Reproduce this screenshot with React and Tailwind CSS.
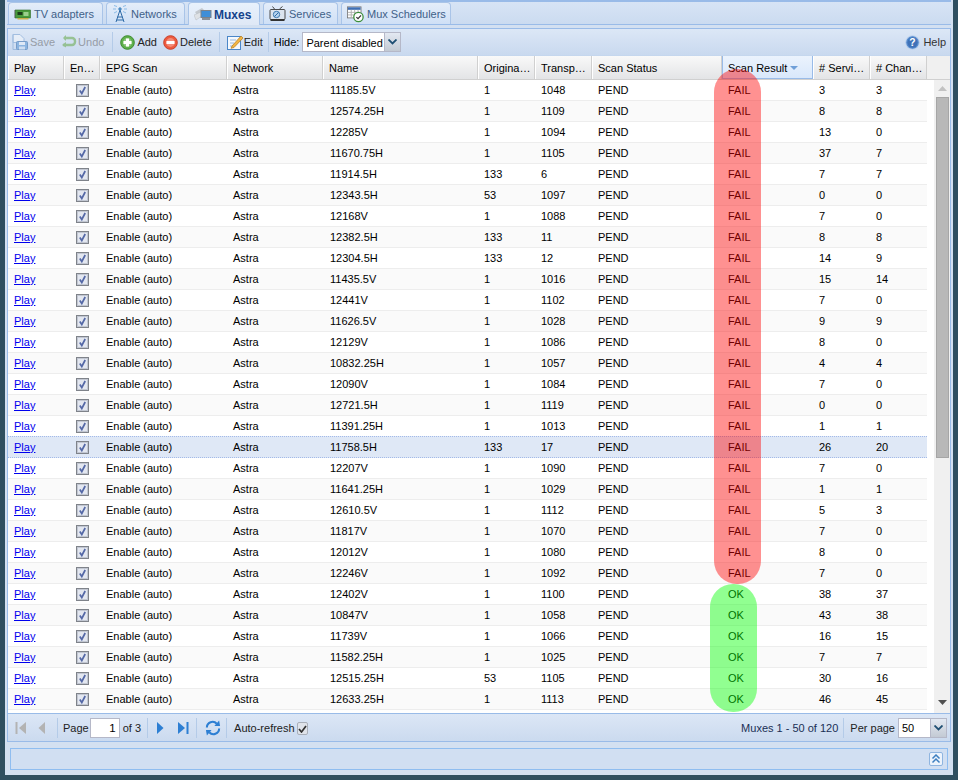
import React from "react";

const rows = [
["11185.5V","1","1048","3","3"],["12574.25H","1","1109","8","8"],["12285V","1","1094","13","0"],["11670.75H","1","1105","37","7"],
["11914.5H","133","6","7","7"],["12343.5H","53","1097","0","0"],["12168V","1","1088","7","0"],["12382.5H","133","11","8","8"],
["12304.5H","133","12","14","9"],["11435.5V","1","1016","15","14"],["12441V","1","1102","7","0"],["11626.5V","1","1028","9","9"],
["12129V","1","1086","8","0"],["10832.25H","1","1057","4","4"],["12090V","1","1084","7","0"],["12721.5H","1","1119","0","0"],
["11391.25H","1","1013","1","1"],["11758.5H","133","17","26","20"],["12207V","1","1090","7","0"],["11641.25H","1","1029","1","1"],
["12610.5V","1","1112","5","3"],["11817V","1","1070","7","0"],["12012V","1","1080","8","0"],["12246V","1","1092","7","0"],
["12402V","1","1100","38","37"],["10847V","1","1058","43","38"],["11739V","1","1066","16","15"],["11582.25H","1","1025","7","7"],
["12515.25H","53","1105","30","16"],["12633.25H","1","1113","46","45"],
];

const Sep = () => <div className="w-px h-[20px] bg-[#b4cbe8] mx-[3px] shrink-0" />;

const HCell = ({ w, children, active }) => (
  <div
    className={`${w} shrink-0 h-full flex items-center pt-[2px] pl-[5px] pr-[2px] whitespace-nowrap overflow-hidden border-r border-l ${
      active
        ? "border-[#99bbe8] border-b bg-gradient-to-b from-[#ebf3fd] to-[#d9e8fb]"
        : "border-l-white border-r-[#d0d0d0] bg-gradient-to-b from-[#f9f9f9] to-[#e3e4e6]"
    }`}
  >
    {children}
  </div>
);

const Cell = ({ w, children, className = "" }) => (
  <div className={`${w} shrink-0 pl-[6px] whitespace-nowrap overflow-hidden ${className}`}>{children}</div>
);

const Check = () => (
  <svg width="13" height="13" viewBox="0 0 13 13" className="block">
    <rect x="0.5" y="0.5" width="12" height="12" fill="#dfe4ee" stroke="#7f838a" />
    <rect x="1.5" y="1.5" width="10" height="10" fill="#e3e7f0" stroke="#c2c7d2" />
    <path d="M3.8 6.5 L5.8 9.5 L9.2 3" fill="none" stroke="#5468a6" strokeWidth="1.7" />
  </svg>
);

const Tab = ({ w, icon, label, active }) => (
  <div
    className={`${w} shrink-0 flex items-center pt-px pl-[5px] rounded-t-[4px] border border-[#a9c4e8] whitespace-nowrap ${
      active
        ? "bg-gradient-to-b from-[#e8f1fc] to-[#dfe8f6] border-b-0 h-[23px] -mb-px font-bold text-[#15428b] text-[12px] gap-[2px]"
        : "h-[22px] gap-[3px] bg-gradient-to-b from-[#e4edf9] to-[#cfe0f6] border-b-0 text-[#3f6188] text-[11px]"
    }`}
  >
    {icon}
    <span>{label}</span>
  </div>
);

const CardIcon = () => (
  <svg width="17" height="14" viewBox="0 0 16 14">
    <path d="M0 3h1v8H0z" fill="#555" />
    <rect x="1" y="3" width="15" height="8" fill="#4a9c3c" stroke="#2f6b28" strokeWidth="0.6" />
    <rect x="3" y="5" width="5" height="3" fill="#1c3d1a" />
    <rect x="9" y="5" width="5" height="4" fill="#9bd08d" />
    <path d="M3 11h11v1.5H3z" fill="#c9b04a" />
  </svg>
);
const TowerIcon = () => (
  <svg width="16" height="18" viewBox="0 0 16 18" fill="none" stroke="#3d7fb8" strokeWidth="1">
    <path d="M8 5 L4 17 M8 5 L12 17 M5.5 12h5 M4.6 15h6.8" stroke="#2e6aa6" />
    <circle cx="8" cy="4" r="1.2" fill="#6aa8df" />
    <path d="M5 1.5 L2 0.5 M11 1.5 L14 0.5 M4 4H1 M12 4h3 M5 6.5 L2 8 M11 6.5 L14 8" stroke="#8bbbe6" />
  </svg>
);
const MuxIcon = () => (
  <svg width="18" height="15" viewBox="0 0 18 15">
    <path d="M1 5l7-4 2 2-7 5z" fill="#c3c8ce" />
    <path d="M0 8l7-3 1 4-6 4z" fill="#dfe2e6" stroke="#b5bac1" strokeWidth="0.5" />
    <rect x="7" y="3.5" width="10" height="7" fill="#3f8ed8" stroke="#7b828b" />
    <rect x="8" y="11" width="8" height="2" fill="#8a9099" />
  </svg>
);
const ServIcon = () => (
  <svg width="17" height="16" viewBox="0 0 16 16" fill="none">
    <path d="M5 3 L3 0.5 M10 3 L13 0.5" stroke="#444" />
    <rect x="0.5" y="3.5" width="15" height="10" rx="1" fill="#dbe4ef" stroke="#4a4a4a" />
    <circle cx="7" cy="8.5" r="3.2" fill="#b5d3ef" stroke="#3d78b0" />
    <path d="M5 10.5l4-4" stroke="#2e6aa6" />
    <rect x="1" y="13" width="14" height="2" fill="#333" />
  </svg>
);
const SchedIcon = () => (
  <svg width="17" height="17" viewBox="0 0 20 19" fill="none">
    <rect x="0.5" y="0.5" width="16" height="13" fill="#fff" stroke="#777" />
    <rect x="1" y="1" width="15" height="3" fill="#3f6fb5" />
    <path d="M1 7h15M1 10h15M5 4v9M9 4v9M13 4v9" stroke="#aaa" />
    <circle cx="13.5" cy="12.5" r="5.5" fill="#fff" stroke="#3c8f3c" strokeWidth="1.5" />
    <path d="M11 12.5l2 2 3.5-4" stroke="#333" strokeWidth="1.4" />
  </svg>
);
const SaveIcon = () => (
  <svg width="16" height="16" viewBox="0 0 16 16" className="opacity-60">
    <path d="M1 .5h7l4 4v4H1z" fill="#f2f6fb" stroke="#7fa6d4" />
    <path d="M1 .5V15.5h4" fill="none" stroke="#7fa6d4" />
    <rect x="4.5" y="7.5" width="11" height="8" rx="1" fill="#5f9ad6" stroke="#3d72ad" />
    <rect x="7" y="8" width="6" height="3" fill="#e8f0fa" />
    <rect x="7" y="12.5" width="6" height="3" fill="#cfe0f2" />
  </svg>
);
const UndoIcon = () => (
  <svg width="16" height="16" viewBox="0 0 16 16" fill="none" className="opacity-60">
    <path d="M3 4h8a3 3 0 0 1 3 3v1a3 3 0 0 1-3 3H2" stroke="#6fae56" strokeWidth="2.4" />
    <path d="M5 13.5L1 11l4-3z" fill="#6fae56" />
    <path d="M5 1L2 4l3 3z" fill="#6fae56" />
  </svg>
);
const CircleBtn = ({ bg, border, plus }) => (
  <svg width="15" height="15" viewBox="0 0 15 15">
    <circle cx="7.5" cy="7.5" r="6.8" fill={bg} stroke={border} />
    <circle cx="7.5" cy="7.5" r="4.4" fill="#ffffff" fillOpacity="0.3" />
    {plus && <rect x="6" y="3.5" width="3" height="8" fill="#fff" />}
    <rect x="3.5" y="6" width="8" height="3" fill="#fff" />
  </svg>
);
const EditIcon = () => (
  <svg width="16" height="16" viewBox="0 0 16 16" fill="none">
    <rect x="0.5" y="2.5" width="13" height="13" fill="#f4f8fd" stroke="#4a86c8" />
    <path d="M3 6h6M3 9h4M3 12h3" stroke="#9ab8dc" />
    <path d="M5 12l9-10 2 2-9 9.5-3 .8z" fill="#f2b544" stroke="#b07a1e" strokeWidth="0.7" />
  </svg>
);
const HelpIcon = () => (
  <svg width="15" height="15" viewBox="0 0 16 16">
    <circle cx="8" cy="8" r="7.3" fill="#5b8fd0" stroke="#c3d6ee" />
    <circle cx="8" cy="8" r="5.5" fill="#3f72b8" />
    <text x="8" y="12" textAnchor="middle" fontSize="11" fontWeight="700" fill="#fff" fontFamily="Liberation Sans">?</text>
  </svg>
);
const Chevron = () => (
  <svg width="9" height="6" viewBox="0 0 9 6"><path d="M0.5 0.5L4.5 4.5L8.5 0.5" fill="none" stroke="#1f4f73" strokeWidth="1.8" /></svg>
);
const Combo = ({ w, text }) => (
  <div className={`${w} h-[20px] flex border border-[#b5b8c8] bg-white shrink-0`}>
    <div className="flex-1 min-w-0 pl-[3px] pt-[2px] flex items-center text-[11px] text-black whitespace-nowrap">{text}</div>
    <div className="w-[16px] shrink-0 border-l border-[#b5b8c8] bg-gradient-to-b from-[#e3e9f2] to-[#c3cad4] flex items-center justify-center"><Chevron /></div>
  </div>
);
const First = ({ c = "#b3b3b3", flip }) => (
  <svg width="12" height="14" viewBox="0 0 12 14">
    <g transform={flip ? "matrix(-1 0 0 1 12 0)" : undefined}>
      <rect x="0.5" y="1" width="2" height="12" fill={c} />
      <path d="M11 1v12L4 7z" fill={c} />
    </g>
  </svg>
);
const Arrow = ({ c = "#b3b3b3", flip }) => (
  <svg width="8" height="14" viewBox="0 0 8 14"><path d={flip ? "M1 1v12l6.5-6z" : "M7 1v12L.5 7z"} fill={c} /></svg>
);

export default function App() {
  return (
    <div className="relative w-[958px] h-[780px] overflow-hidden bg-[#2f4f60] p-[0_5px_5px_5px] text-[11px] text-black font-['Liberation_Sans',Arial,sans-serif]">
      <div className="h-[775px] w-[948px] bg-[#d3e0f1] px-[2px] flex flex-col">
        {/* Tabs */}
        <div className="h-[25px] shrink-0 border-t-2 border-[#99bbe8] border-b bg-gradient-to-b from-[#d7e4f5] to-[#cbdbf0] flex items-end gap-[3px] pl-px">
          <Tab w="w-[95px]" icon={<CardIcon />} label="TV adapters" />
          <Tab w="w-[79px]" icon={<TowerIcon />} label="Networks" />
          <Tab w="w-[72px]" icon={<MuxIcon />} label="Muxes" active />
          <Tab w="w-[75px]" icon={<ServIcon />} label="Services" />
          <Tab w="w-[110px]" icon={<SchedIcon />} label="Mux Schedulers" />
        </div>
        {/* Panel */}
        <div className="mt-[3px] w-[944px] border-x border-[#99bbe8] flex flex-col h-[714px] shrink-0">
          {/* Toolbar */}
          <div className="h-[28px] shrink-0 border-y border-[#99bbe8] border-b-[#c5d7ee] bg-gradient-to-b from-[#dce7f6] to-[#c9d9ef] flex items-center pl-[4px] pr-[4px] text-[#222]">
            <div className="flex items-center gap-[2px] text-[#969ca6]"><SaveIcon /><span>Save</span></div>
            <div className="flex items-center gap-[1px] text-[#969ca6] ml-[6px]"><UndoIcon /><span>Undo</span></div>
            <div className="ml-[5px]"><Sep /></div>
            <div className="flex items-center gap-[2px] ml-[4px]"><CircleBtn bg="#5fb04c" border="#3b8a2c" plus /><span>Add</span></div>
            <div className="flex items-center gap-[2px] ml-[6px]"><CircleBtn bg="#ee5a3e" border="#c9402a" /><span>Delete</span></div>
            <div className="ml-[4px]"><Sep /></div>
            <div className="flex items-center gap-[1px] ml-[4px]"><EditIcon /><span>Edit</span></div>
            <div className="ml-[2px]"><Sep /></div>
            <span className="ml-[2px] mr-[3px] text-black">Hide:</span>
            <Combo w="w-[99px]" text="Parent disabled" />
            <div className="ml-auto flex items-center gap-[3px]"><HelpIcon /><span className="text-[#333]">Help</span></div>
          </div>
          {/* Grid */}
          <div className="relative flex-1 bg-white overflow-hidden flex flex-col min-h-0">
            <div className="h-[24px] shrink-0 flex bg-[#f0f0f0] border-b border-[#d0d0d0]">
              <HCell w="w-[56px]">Play</HCell>
              <HCell w="w-[36px]">En…</HCell>
              <HCell w="w-[127px]">EPG Scan</HCell>
              <HCell w="w-[96px]">Network</HCell>
              <HCell w="w-[155px]">Name</HCell>
              <HCell w="w-[57px]">Origina…</HCell>
              <HCell w="w-[57px]">Transp…</HCell>
              <HCell w="w-[130px]">Scan Status</HCell>
              <HCell w="w-[91px]" active>
                Scan Result
                <svg width="8" height="4" viewBox="0 0 8 4" className="ml-[3px]"><path d="M0 0h8L4 4z" fill="#6f9fd8" /></svg>
              </HCell>
              <HCell w="w-[57px]"># Servi…</HCell>
              <HCell w="w-[57px]"># Chan…</HCell>
            </div>
            <div className="flex-1 flex min-h-0">
              <div className="w-[919px] shrink-0 overflow-hidden">
                {rows.map((r, i) => {
                  const sel = i === 17;
                  return (
                    <div
                      key={r[0]}
                      className={`flex items-center border-b ${
                        sel
                          ? "bg-[#dfe8f6] border-dotted border-t border-[#a3bae9] -mt-px h-[22px]"
                          : i % 2
                          ? "h-[21px] bg-[#fafafa] border-[#ededed]"
                          : "h-[21px] bg-white border-[#ededed]"
                      }`}
                    >
                      <Cell w="w-[56px]"><span className="text-[#0000ee] underline">Play</span></Cell>
                      <div className="w-[36px] shrink-0 flex justify-center"><Check /></div>
                      <Cell w="w-[127px]">Enable (auto)</Cell>
                      <Cell w="w-[96px]">Astra</Cell>
                      <Cell w="w-[155px]" className="pl-[7px]">{r[0]}</Cell>
                      <Cell w="w-[57px]">{r[1]}</Cell>
                      <Cell w="w-[57px]">{r[2]}</Cell>
                      <Cell w="w-[130px]">PEND</Cell>
                      <Cell w="w-[91px]">{i < 24 ? "FAIL" : "OK"}</Cell>
                      <Cell w="w-[57px]">{r[3]}</Cell>
                      <Cell w="w-[57px]">{r[4]}</Cell>
                    </div>
                  );
                })}
              </div>
              <div className="w-[7px] shrink-0" />
              <div className="w-[16px] shrink-0 bg-[#f0f0f0] flex flex-col items-center">
                <svg width="9" height="5" viewBox="0 0 9 5" className="mt-[6px]"><path d="M0 5h9L4.5 0z" fill="#c2c2c2" /></svg>
                <div className="mt-[6px] w-[13px] h-[361px] bg-[#b8b8b8] border border-[#a6a6a6]" />
                <svg width="9" height="5" viewBox="0 0 9 5" className="mt-auto mb-[8px]"><path d="M0 0h9L4.5 5z" fill="#505050" /></svg>
              </div>
            </div>
          </div>
          {/* Pager */}
          <div className="h-[29px] shrink-0 border-y border-[#99bbe8] bg-gradient-to-b from-[#dce7f6] to-[#cbdaef] flex items-center pl-[7px] pr-[3px] text-[#222]">
            <First />
            <div className="ml-[11px]"><Arrow /></div>
            <div className="ml-[8px]"><Sep /></div>
            <span className="ml-[2px] pt-[2px]">Page</span>
            <div className="ml-[1px] w-[30px] h-[20px] bg-white border border-[#b5b8c8] flex items-center justify-end pt-[2px] pr-[3px] text-[11.5px] text-black">1</div>
            <span className="ml-[3px] pt-[2px]">of 3</span>
            <div className="ml-[3px]"><Sep /></div>
            <div className="ml-[5px]"><Arrow c="#2d7fd3" flip /></div>
            <div className="ml-[13px]"><First c="#2d7fd3" flip /></div>
            <div className="ml-[4px]"><Sep /></div>
            <svg width="16" height="16" viewBox="0 0 17 17" fill="none" className="ml-[5px]">
              <path d="M2 8a6 6 0 0 1 10.5-4" stroke="#2d7fd3" strokeWidth="2.2" />
              <path d="M10 6.5L16 6.5 15 .5z" fill="#2d7fd3" />
              <path d="M15 9a6 6 0 0 1-10.5 4" stroke="#2d7fd3" strokeWidth="2.2" />
              <path d="M7 10.5H1l1 6z" fill="#2d7fd3" />
            </svg>
            <div className="ml-[2px]"><Sep /></div>
            <span className="ml-[4px] pt-[2px]">Auto-refresh</span>
            <div className="ml-[2px] w-[11px] h-[13px] mt-[2px] rounded-[2px] bg-[#dfe3ea] border border-[#a9afb9] flex items-center justify-center">
              <svg width="9" height="8" viewBox="0 0 9 8"><path d="M1 4l2.5 3L8 1" fill="none" stroke="#333" strokeWidth="1.7" /></svg>
            </div>
            <div className="ml-auto flex items-center">
              <span className="text-[#1a2f55] pt-[2px]">Muxes 1 - 50 of 120</span>
              <div className="ml-[2px]"><Sep /></div>
              <span className="ml-[3px] mr-[3px] pt-[2px]">Per page</span>
              <Combo w="w-[49px]" text="50" />
            </div>
          </div>
        </div>
        {/* Bottom bar */}
        <div className="mt-[6px] ml-[3px] w-[938px] h-[22px] border border-[#8fbdf0] bg-[#d1dff2] flex items-center justify-end pr-[4px] shrink-0">
          <div className="w-[14px] h-[14px] rounded-[2px] border border-[#8fb5e0] bg-[#ecf3fc] flex items-center justify-center">
            <svg width="10" height="10" viewBox="0 0 10 10" fill="none" stroke="#3d7fc0" strokeWidth="1.5"><path d="M1.5 4.5L5 1l3.5 3.5M1.5 8.5L5 5l3.5 3.5" /></svg>
          </div>
        </div>
      </div>
      {/* Hand-drawn highlight annotations */}
      <div className="absolute left-[714px] top-[69px] w-[47px] h-[515px] rounded-[23px] bg-[rgba(255,0,0,0.43)]" />
      <div className="absolute left-[710px] top-[584px] w-[47px] h-[128px] rounded-[23px] bg-[rgba(0,255,0,0.43)]" />
    </div>
  );
}
